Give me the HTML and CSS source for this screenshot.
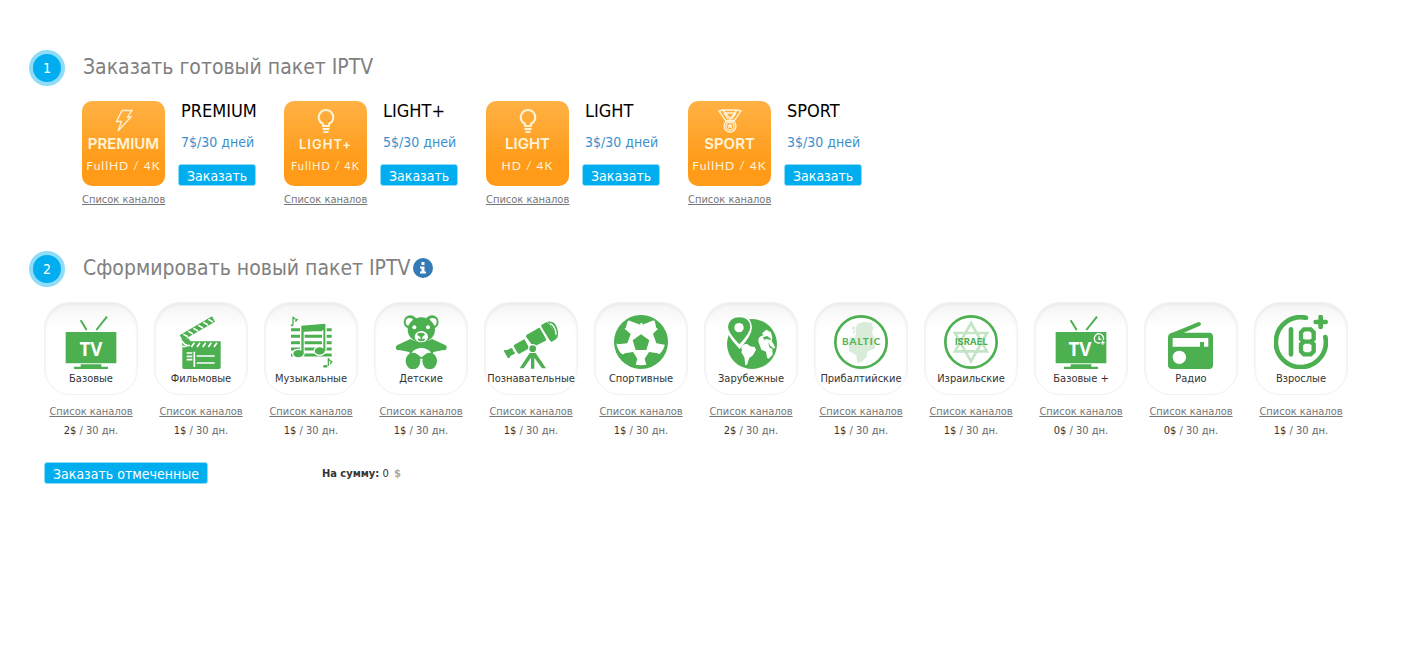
FILE: index.html
```html
<!DOCTYPE html>
<html lang="ru">
<head>
<meta charset="utf-8">
<title>Пакеты IPTV</title>
<link rel="stylesheet" href="styles.css">
</head>
<body>
<main class="page">
<section class="step">
  <header class="step-head"><span class="step-num">1</span><h2 class="step-title">Заказать готовый пакет IPTV</h2></header>
  <div class="packages">
    <article class="package">
      <div class="package-side">
        <div class="tile">
          <svg class="tile-icon" viewBox="0 0 24 24"><path d="M10 1.500h10l-4.500 6.500h3.500L6 22l3.500-9.500H4.500z"/></svg>
          <b class="tile-name">PREMIUM</b><span class="tile-sub">FullHD / 4K</span>
        </div>
        <a class="list-link" href="#">Список каналов</a>
      </div>
      <div class="package-info"><h3 class="package-name">PREMIUM</h3><p class="package-price">7$/30 дней</p><button class="btn" type="button">Заказать</button></div>
    </article>
    <article class="package">
      <div class="package-side">
        <div class="tile">
          <svg class="tile-icon" viewBox="0 0 24 24"><path class="thick" d="M9 17v-2a7.300 7.300 0 1 1 6 0v2zM8.500 20h7M9.500 23h5"/></svg>
          <b class="tile-name tracked">LIGHT+</b><span class="tile-sub small">FullHD / 4K</span>
        </div>
        <a class="list-link" href="#">Список каналов</a>
      </div>
      <div class="package-info"><h3 class="package-name">LIGHT+</h3><p class="package-price">5$/30 дней</p><button class="btn" type="button">Заказать</button></div>
    </article>
    <article class="package">
      <div class="package-side">
        <div class="tile">
          <svg class="tile-icon" viewBox="0 0 24 24"><path class="thick" d="M9 17v-2a7.300 7.300 0 1 1 6 0v2zM8.500 20h7M9.500 23h5"/></svg>
          <b class="tile-name">LIGHT</b><span class="tile-sub">HD / 4K</span>
        </div>
        <a class="list-link" href="#">Список каналов</a>
      </div>
      <div class="package-info"><h3 class="package-name">LIGHT</h3><p class="package-price">3$/30 дней</p><button class="btn" type="button">Заказать</button></div>
    </article>
    <article class="package">
      <div class="package-side">
        <div class="tile">
          <svg class="tile-icon" viewBox="0 0 24 24"><path d="M5 1h14l4 1-7 10H8L1 2zM5 1l7 9 7-9M8 4h8M1 2l4-1M6 4l4 6M18 4l-4 6"/><circle cx="12" cy="17" r="6"/><circle cx="12" cy="17" r="4"/><path class="solid" d="M12 14l1 2h2l-1.500 1.500.5 2-2-1-2 1 .5-2L9 16h2z"/></svg>
          <b class="tile-name">SPORT</b><span class="tile-sub">FullHD / 4K</span>
        </div>
        <a class="list-link" href="#">Список каналов</a>
      </div>
      <div class="package-info"><h3 class="package-name">SPORT</h3><p class="package-price">3$/30 дней</p><button class="btn" type="button">Заказать</button></div>
    </article>
  </div>
</section>

<section class="step">
  <header class="step-head"><span class="step-num">2</span><h2 class="step-title">Сформировать новый пакет IPTV</h2>
    <svg class="info" viewBox="0 0 20 20"><circle cx="10" cy="10" r="10"/><path d="M8.500 4h3v3h-3zM7 8.500h4.500v5H13v2H7v-2h1.500v-3H7z"/></svg>
  </header>
  <form class="builder">
    <div class="categories">
      <div class="category">
        <label class="card"><input class="card-check" type="checkbox">
          <svg class="icon" viewBox="72 60 162 162"><path d="M77 111h152v94H77zM122 208h62v7h20v7h-102v-7h20z"/><path class="line w5" d="M122 76l18 29M201 65l-32 40"/><text class="tv" x="153" y="183">TV</text></svg>
          <span class="card-name">Базовые</span></label>
        <a class="list-link" href="#">Список каналов</a><p class="price"><b>2$</b> / 30 дн.</p>
      </div>
      <div class="category">
        <label class="card"><input class="card-check" type="checkbox">
          <svg class="icon" viewBox="402 60 162 162"><path d="M419 121l97-57 9 16-96 56z"/><path d="M425 132l20-2 9 12-7 10h-20zM427 157h115v60q0 5-5 5H432q-5 0-5-5z"/><path d="M449 139h93v20h-105z"/><path class="cut w4" d="M430 118l14 7M445 109l14 8M460 100l14 8M475 91l14 8M490 82l14 8M505 73l14 8M463 143l-9 13M480 143l-9 13M497 143l-9 13M514 143l-9 13M531 143l-9 13"/><path class="cut w4" d="M463 170v46M440 174h17M440 184h17M440 194h17M470 183h54M470 204h54M425 137q13 18 25 14"/></svg>
          <span class="card-name">Фильмовые</span></label>
        <a class="list-link" href="#">Список каналов</a><p class="price"><b>1$</b> / 30 дн.</p>
      </div>
      <div class="category">
        <label class="card"><input class="card-check" type="checkbox">
          <svg class="icon" viewBox="72 60 162 162"><path class="line w9" d="M93 104h122M93 124h122M93 143h122M93 162h122M93 180h122"/><path class="halo" d="M127 92l66-4v78M127 92v82"/><ellipse class="halo" cx="115" cy="176" rx="12" ry="8"/><ellipse class="halo" cx="179" cy="168" rx="12" ry="8"/><path d="M124 92l72-6v82h-6v-62l-59 4v68h-7z"/><ellipse cx="115" cy="176" rx="15" ry="11"/><ellipse cx="179" cy="168" rx="15" ry="11"/><path class="line w3" d="M99 89V65q3 7 12 9-3 3-5 6M205 213v-23q3 8 10 10-3 3-4 8"/><ellipse cx="96" cy="91" rx="4" ry="3"/><ellipse cx="196" cy="214" rx="7" ry="4"/></svg>
          <span class="card-name">Музыкальные</span></label>
        <a class="list-link" href="#">Список каналов</a><p class="price"><b>1$</b> / 30 дн.</p>
      </div>
      <div class="category">
        <label class="card"><input class="card-check" type="checkbox">
          <svg class="icon" viewBox="402 60 162 162"><circle cx="451" cy="81" r="20"/><circle cx="516" cy="81" r="20"/><circle class="white" cx="449" cy="81" r="12"/><circle class="white" cx="518" cy="81" r="12"/><ellipse cx="484" cy="104" rx="41" ry="37"/><path d="M451 132q33 18 65 0l41 19q6 5 2 11-3 5-9 3l-30 6-6 20h-60l-6-20-30-6q-6 2-10-4-3-6 3-10z"/><path class="white" d="M450 186q4-25 34-28 30 3 34 28-18-16-32 0h-4q-14-16-32 0z"/><ellipse cx="459" cy="198" rx="22" ry="25"/><ellipse cx="509" cy="198" rx="22" ry="25"/><circle class="white" cx="463" cy="97" r="6"/><circle class="white" cx="504" cy="97" r="6"/><ellipse class="white" cx="484" cy="125" rx="20" ry="17"/><path d="M471 119q1-6 12-6t12 6l-11 9z"/><path class="line w4" d="M484 125v8M474 132q10 8 20 0"/></svg>
          <span class="card-name">Детские</span></label>
        <a class="list-link" href="#">Список каналов</a><p class="price"><b>1$</b> / 30 дн.</p>
      </div>
      <div class="category">
        <label class="card"><input class="card-check" type="checkbox">
          <svg class="icon" viewBox="72 60 162 162"><path d="M73 165l8 0 16-7 3 3 5 10-1 5-13 7-3 7-5-2-11-19zM102 150l32-18 15 27-32 18q-4 0-16-24zM139 120l38-22 6 2 17 31-3 6-36 18-3-3-20-27zM184 90l16-9q11 7 20 24 9 15 9 27l-15 9-7-8-23-38z"/><path d="M202 80q25-4 31 25 3 18-3 26-5-15-12-28-7-14-16-23z"/><path class="cut w3" d="M210 85q18 9 18 34"/><path class="cut w3" d="M98 159l6 12M135 132l16 28M180 96l21 37"/><circle class="white" cx="158" cy="161" r="14"/><circle cx="158" cy="161" r="10"/><path d="M149 174h18l31 46h-12l-23-32v33h-10v-33l-22 32h-12z"/></svg>
          <span class="card-name">Познавательные</span></label>
        <a class="list-link" href="#">Список каналов</a><p class="price"><b>1$</b> / 30 дн.</p>
      </div>
      <div class="category">
        <label class="card"><input class="card-check" type="checkbox">
          <svg class="icon" viewBox="402 60 162 162"><circle cx="483" cy="141" r="81"/><path class="white" d="M443 79l-6 20-22 12-6 34q3 20 16 32l30 7 7 24q21 6 42 0l6-24 28-7q15-12 17-33l-5-33-21-12-5-22q-5-3-17-3l-25 11-24-10q-12 0-15 4z"/><path d="M483 118l25 18-9 29h-32l-9-29zM448 77l33 12v-20h6v20l34-13-8-9-30-6-30 6zM432 100l20 17-10 28-30 3-9-8 5-25zM536 100l-17 16 10 29 25 4 9-9-4-26zM434 175l25-4 13 20-7 26-20-8-20-25zM533 175l-26-4-13 20 7 25 20-8 21-25z"/></svg>
          <span class="card-name">Спортивные</span></label>
        <a class="list-link" href="#">Список каналов</a><p class="price"><b>1$</b> / 30 дн.</p>
      </div>
      <div class="category">
        <label class="card"><input class="card-check" type="checkbox">
          <svg class="icon" viewBox="72 60 162 162"><circle cx="156" cy="147" r="75"/><path class="white" d="M123 158q8-15 20-10l7 6 14 2 4 8-9 17-11 8-7 20-5 2-3-24-9-15 2-8zM177 145q-6-14 5-21l8-3-4-6 13-11 14 8 4 16-2 10 7 12 4 8-9 4 1 17-12 12-5-3-3-18-14-6z"/><path d="M189 127l12-4 12 8-2 4-10-3-9 2zM204 142l8 12 8 5-2 3-9-4z"/><path class="white" d="M119 162q-40-41-40-65 5-36 39-36t38 36q0 24-37 65z"/><path d="M118 148Q84 113 84 96q3-29 34-29t33 29q0 17-33 52z"/><circle class="white" cx="117" cy="98" r="14"/></svg>
          <span class="card-name">Зарубежные</span></label>
        <a class="list-link" href="#">Список каналов</a><p class="price"><b>2$</b> / 30 дн.</p>
      </div>
      <div class="category">
        <label class="card"><input class="card-check" type="checkbox">
          <svg class="icon" viewBox="402 60 162 162"><circle class="ring" cx="483" cy="141" r="77"/><path class="pale" d="M472 86l18-5 25 2 5 18-4 12 7 17 2 30-23 10-2 16-15 14-12 4-5-24-20-11-3-24 6-19 14 3 4-18-2-10zM455 96l10-1 1 5-8 5zM459 108l8-3-2 6-7 6z"/><text class="region" x="485" y="150">BALTIC</text></svg>
          <span class="card-name">Прибалтийские</span></label>
        <a class="list-link" href="#">Список каналов</a><p class="price"><b>1$</b> / 30 дн.</p>
      </div>
      <div class="category">
        <label class="card"><input class="card-check" type="checkbox">
          <svg class="icon" viewBox="72 60 162 162"><circle class="ring" cx="153" cy="141" r="77"/><path class="star" d="M153 84l48 85h-96zM153 199l-48-85h96z"/><text class="region bold" x="154" y="151">ISRAEL</text></svg>
          <span class="card-name">Израильские</span></label>
        <a class="list-link" href="#">Список каналов</a><p class="price"><b>1$</b> / 30 дн.</p>
      </div>
      <div class="category">
        <label class="card"><input class="card-check" type="checkbox">
          <svg class="icon" viewBox="402 60 162 162"><path d="M407 111h152v94H407zM452 208h62v7h20v7h-102v-7h20z"/><path class="line w5" d="M452 76l18 29M531 65l-32 40"/><text class="tv" x="480" y="183">TV</text><path class="cut w3" d="M550 135a14 14 0 1 0-10 9M537 124v9h7M548 137v12M542 143h12"/></svg>
          <span class="card-name">Базовые +</span></label>
        <a class="list-link" href="#">Список каналов</a><p class="price"><b>0$</b> / 30 дн.</p>
      </div>
      <div class="category">
        <label class="card"><input class="card-check" type="checkbox">
          <svg class="icon" viewBox="72 60 162 162"><path d="M97 113l79-32q6 0 7 6 0 4-5 6l-47 20h76q12 0 12 12v85q0 12-12 12H96q-12 0-12-12v-83q0-12 13-14z"/><path class="white" d="M98 129h107v26h-13v-14h-12v14H98z"/><circle class="white" cx="118" cy="187" r="20"/></svg>
          <span class="card-name">Радио</span></label>
        <a class="list-link" href="#">Список каналов</a><p class="price"><b>0$</b> / 30 дн.</p>
      </div>
      <div class="category">
        <label class="card"><input class="card-check" type="checkbox">
          <svg class="icon" viewBox="402 60 162 162"><path class="line w12 round" d="M498 68A75 75 0 1 0 556 126M453 103v75M542 66v30M527 81h30"/><path class="line w11" d="M492 103h20l9 9v20l-9 8 9 8v21l-9 9h-20l-9-9v-21l9-8-9-8v-20zM492 140h20"/></svg>
          <span class="card-name">Взрослые</span></label>
        <a class="list-link" href="#">Список каналов</a><p class="price"><b>1$</b> / 30 дн.</p>
      </div>
    </div>
    <div class="order">
      <button class="btn" type="button">Заказать отмеченные</button>
      <p class="total"><b>На сумму:</b> <output>0</output> <b class="currency">$</b></p>
    </div>
  </form>
</section>
</main>
</body>
</html>
```
FILE: styles.css
```css
* { box-sizing: border-box; }
body { margin: 0; background: #fff; color: #333; font-family: "DejaVu Sans Condensed", "DejaVu Sans", sans-serif; font-stretch: condensed; font-size: 11px; line-height: 16px; }
h2, h3, p { margin: 0; font-weight: normal; }
.page { display: flex; flex-direction: column; gap: 43px; padding: 50px 29px; }
.step-head { display: flex; align-items: center; height: 36px; }
.step-num { display: grid; place-items: center; width: 36px; height: 36px; margin-right: 18px; border: 4px solid #8edcf7; border-radius: 50%; background: #00aeef; color: #fff; font-size: 14px; }
.step-title { color: #808080; font-size: 21px; line-height: 28px; padding-bottom: 2px; }
.info { width: 20px; height: 20px; margin: 0 0 3px 3px; fill: #337ab7; }
.info path { fill: #fff; }

.packages { display: flex; flex-wrap: wrap; gap: 16px 24px; padding: 15px 0 0 53px; }
.package { display: flex; gap: 13px; min-width: 178px; }
.package-side { width: 83px; }
.tile { display: flex; flex-direction: column; align-items: center; height: 85px; margin-bottom: 6px; padding-top: 8px; border-radius: 10px; background: linear-gradient(#ffb144, #ff9b18 75%); color: #fff4d8; white-space: nowrap; }
.tile-icon { width: 24px; height: 24px; fill: none; stroke: #fff4d8; stroke-width: 1.3; }
.tile-icon .thick { stroke-width: 2; }
.tile-icon .solid { fill: #fff4d8; stroke: none; }
.tile-name { font: 600 15px/20px Inter, sans-serif; padding-top: 1px; }
.tracked { font-size: 13px; letter-spacing: 1px; }
.tile-sub { padding-top: 3px; font: 12px/18px Lato, sans-serif; letter-spacing: 1px; }
.tile-sub.small { font-size: 11px; }
.list-link { color: #777; text-decoration: underline; white-space: nowrap; }
.package-info { display: flex; flex-direction: column; align-items: flex-start; }
.package-name { padding-left: 3px; color: #000; font-size: 18px; line-height: 20px; }
.package-price { padding: 11px 0 12px 3px; color: #3a8fcb; font-size: 14px; line-height: 20px; }
.btn { height: 22px; padding: 1px 8px 0; border: 1px solid #8edcf7; border-radius: 3px; background: #00aeef; color: #fff; font: inherit; font-size: 14px; line-height: 20px; white-space: nowrap; }

.categories { display: flex; flex-wrap: wrap; gap: 16px; padding: 15px 0 0 15px; }
.category { display: flex; flex-direction: column; align-items: center; width: 94px; }
.card { position: relative; display: flex; flex-direction: column; align-items: center; width: 94px; height: 93px; margin-bottom: 9px; padding-top: 12px; border: 1px solid #f1f1f1; border-radius: 26px; background: linear-gradient(#f5f5f5, #fff 26px); box-shadow: inset 0 2px 3px #ebebeb; cursor: pointer; }
.card-check { position: absolute; inset: 0; margin: 0; opacity: 0; cursor: pointer; }
.card-name { padding-top: 2px; line-height: 16px; white-space: nowrap; }
.price { padding-top: 3px; color: #666; }
.price b { color: #333; font-weight: normal; }
.icon { width: 54px; height: 54px; flex: none; fill: #4caf50; }
.white { fill: #fff; }
.line, .cut, .ring, .halo, .star { fill: none; stroke: #4caf50; }
.cut { stroke: #fff; }
.halo { stroke: #fff; stroke-width: 14; }
.ring { fill: #fff; stroke-width: 8; }
.pale { fill: #d8ecd9; }
.star { stroke: #c4e4c6; stroke-width: 8; }
.w3 { stroke-width: 4; }
.w4 { stroke-width: 5; }
.w5 { stroke-width: 6; }
.w9 { stroke-width: 9; }
.w11 { stroke-width: 13; }
.w12 { stroke-width: 14; }
.round { stroke-linecap: round; }
.tv { fill: #fff; font: bold 56px "Open Sans", sans-serif; text-anchor: middle; }
.region { font: bold 30px Lato, sans-serif; text-anchor: middle; letter-spacing: 3px; }
.region.bold { font: bold 28px Inter, sans-serif; letter-spacing: 0; }

.order { display: flex; align-items: center; gap: 114px; padding: 23px 0 0 15px; }
.total { padding-top: 2px; }
.currency { padding-left: 2px; color: #aaa; }
```
